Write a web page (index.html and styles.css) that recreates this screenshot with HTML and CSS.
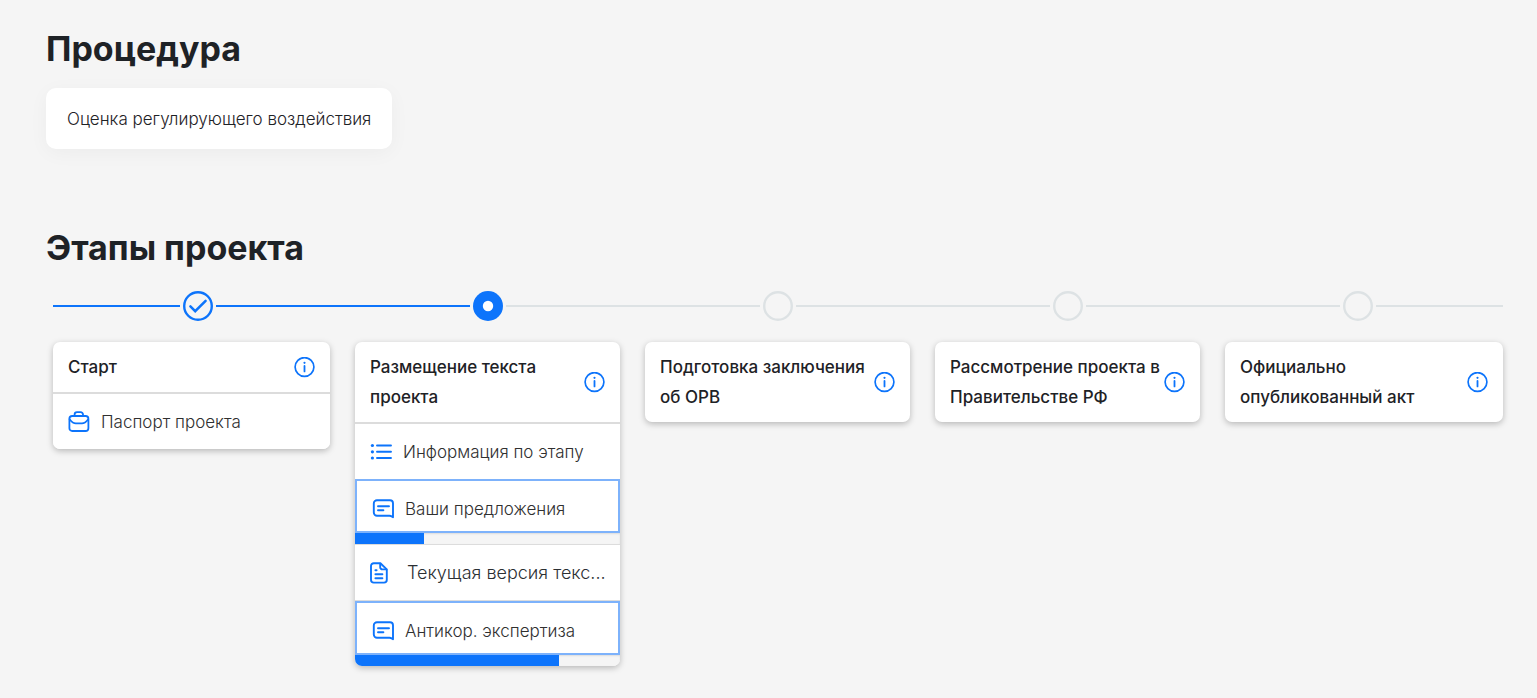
FILE: index.html
```html
<!DOCTYPE html>
<html lang="ru">
<head>
<meta charset="utf-8">
<meta name="viewport" content="width=device-width, initial-scale=1">
<title>Этапы проекта</title>
<link rel="stylesheet" href="styles.css">
</head>
<body>
<svg class="sprite" aria-hidden="true">
  <symbol id="info" viewBox="0 0 21 21">
    <circle cx="10.5" cy="10" r="9.4" fill="none" stroke="currentColor" stroke-width="1.7"/>
    <path d="M10.5 9v5.4" fill="none" stroke="currentColor" stroke-width="1.8" stroke-linecap="round"/>
    <circle cx="10.5" cy="5.8" r="1.1" fill="currentColor"/>
  </symbol>
  <symbol id="case" viewBox="0 0 22 22">
    <g fill="none" stroke="currentColor" stroke-width="1.8" stroke-linecap="round" stroke-linejoin="round">
      <rect x="1.4" y="5" width="19" height="15" rx="2.8"/>
      <path d="M6.6 4.8V3.6a2.4 2.4 0 0 1 2.4-2.4h3.6A2.4 2.4 0 0 1 15 3.6v1.2M1.6 8.2c2 2.6 3.8 4.2 6.2 4.2h6.2c2.4 0 4.2-1.6 6.2-4.2"/>
    </g>
  </symbol>
  <symbol id="list" viewBox="0 0 22 22">
    <path d="M7 4.5H21M7 10.8H21M7 17H21" fill="none" stroke="currentColor" stroke-width="1.9" stroke-linecap="round"/>
    <g fill="currentColor"><circle cx="2.4" cy="4.5" r="1.6"/><circle cx="2.4" cy="10.8" r="1.6"/><circle cx="2.4" cy="17" r="1.6"/></g>
  </symbol>
  <symbol id="chat" viewBox="0 0 22 22">
    <g fill="none" stroke="currentColor" stroke-width="1.9" stroke-linecap="round" stroke-linejoin="round">
      <path d="M5 2.2h13A3 3 0 0 1 21 5.2v14c-1.2-.7-2.2-1.4-3.6-1.4H5A3.2 3.2 0 0 1 1.8 14.6V5.4A3.2 3.2 0 0 1 5 2.2z"/>
      <path d="M6 8.2h11M6 12.2h5.4"/>
    </g>
  </symbol>
  <symbol id="doc" viewBox="0 0 22 22">
    <g fill="none" stroke="currentColor" stroke-width="1.9" stroke-linecap="round" stroke-linejoin="round">
      <path d="M3.8 1.2h6.6l6.4 6.2v10.4a2.8 2.8 0 0 1-2.8 2.8H3.8A2.8 2.8 0 0 1 1 17.8V4a2.8 2.8 0 0 1 2.8-2.8z"/>
      <path d="M10.2 1.6v3.6a2.2 2.2 0 0 0 2.2 2.2h4M5.4 8.2h1.2M5.4 12.2h7M5.4 16.2h7"/>
    </g>
  </symbol>
</svg>

<main class="page">
  <section class="procedure">
    <h1 class="title">Процедура</h1>
    <div class="procedure-card">Оценка регулирующего воздействия</div>
  </section>

  <section class="stages">
    <h2 class="title">Этапы проекта</h2>
    <ol class="stage-list">
      <li class="stage">
        <div class="track">
          <span class="line line-done"></span>
          <svg class="dot dot-active" viewBox="0 0 30 30" role="img" aria-label="Завершён"><circle cx="15" cy="15" r="13.8" fill="none" stroke="currentColor" stroke-width="2.4"/><path d="M7.4 15.4l4.8 4.8L22.6 9.8" fill="none" stroke="currentColor" stroke-width="2.5" stroke-linecap="round"/></svg>
          <span class="line line-done"></span>
        </div>
        <article class="card">
          <header class="card-head"><h3 class="card-title">Старт</h3><button class="info" type="button" aria-label="Информация"><svg class="icon-info"><use href="#info"/></svg></button></header>
          <a class="row row-first" href="#passport"><svg class="icon"><use href="#case"/></svg><span class="label">Паспорт проекта</span></a>
        </article>
      </li>
      <li class="stage">
        <div class="track">
          <span class="line line-done"></span>
          <svg class="dot dot-active" viewBox="0 0 30 30" role="img" aria-label="Текущий"><circle cx="15" cy="15" r="15" fill="currentColor"/><circle cx="15" cy="15" r="5.2" fill="#fff"/></svg>
          <span class="line"></span>
        </div>
        <article class="card">
          <header class="card-head"><h3 class="card-title">Размещение текста проекта</h3><button class="info" type="button" aria-label="Информация"><svg class="icon-info"><use href="#info"/></svg></button></header>
          <a class="row row-first" href="#info-stage"><svg class="icon"><use href="#list"/></svg><span class="label">Информация по этапу</span></a>
          <button class="row row-outlined" type="button"><svg class="icon"><use href="#chat"/></svg><span class="label">Ваши предложения</span></button>
          <div class="progress"><div class="bar" style="width:26%"></div></div>
          <a class="row row-file" href="#text"><svg class="icon"><use href="#doc"/></svg><span class="label">Текущая версия текс...</span></a>
          <button class="row row-outlined" type="button"><svg class="icon"><use href="#chat"/></svg><span class="label">Антикор. экспертиза</span></button>
          <div class="progress"><div class="bar" style="width:77%"></div></div>
        </article>
      </li>
      <li class="stage">
        <div class="track">
          <span class="line"></span>
          <svg class="dot" viewBox="0 0 30 30" aria-hidden="true"><circle cx="15" cy="15" r="13.8" fill="none" stroke="currentColor" stroke-width="2.4"/></svg>
          <span class="line"></span>
        </div>
        <article class="card">
          <header class="card-head"><h3 class="card-title">Подготовка заключения об ОРВ</h3><button class="info" type="button" aria-label="Информация"><svg class="icon-info"><use href="#info"/></svg></button></header>
        </article>
      </li>
      <li class="stage">
        <div class="track">
          <span class="line"></span>
          <svg class="dot" viewBox="0 0 30 30" aria-hidden="true"><circle cx="15" cy="15" r="13.8" fill="none" stroke="currentColor" stroke-width="2.4"/></svg>
          <span class="line"></span>
        </div>
        <article class="card">
          <header class="card-head"><h3 class="card-title">Рассмотрение проекта в Правительстве РФ</h3><button class="info" type="button" aria-label="Информация"><svg class="icon-info"><use href="#info"/></svg></button></header>
        </article>
      </li>
      <li class="stage">
        <div class="track">
          <span class="line"></span>
          <svg class="dot" viewBox="0 0 30 30" aria-hidden="true"><circle cx="15" cy="15" r="13.8" fill="none" stroke="currentColor" stroke-width="2.4"/></svg>
          <span class="line"></span>
        </div>
        <article class="card">
          <header class="card-head"><h3 class="card-title">Официально опубликованный акт</h3><button class="info" type="button" aria-label="Информация"><svg class="icon-info"><use href="#info"/></svg></button></header>
        </article>
      </li>
    </ol>
  </section>
</main>
</body>
</html>
```
FILE: styles.css
```css
* {
  box-sizing: border-box;
}

body {
  margin: 0;
  background: #f5f5f5;
  color: #1e2226;
  font-family: Inter, "Liberation Sans", sans-serif;
  font-size: 17px;
  font-weight: 300;
}

.sprite {
  position: absolute;
  width: 0;
  height: 0;
}

.page {
  padding: 27px 34px 32px 46px;
}

.title {
  margin: 0;
  font-size: 34px;
  font-weight: 700;
  line-height: 44px;
}

.procedure-card {
  width: fit-content;
  margin-top: 17px;
  padding: 16px 21px 15px;
  border-radius: 10px;
  background: #fff;
  box-shadow: 0 4px 20px rgba(0, 0, 0, 0.04);
  line-height: 30px;
}

.stages {
  margin-top: 77px;
}

.stage-list {
  display: grid;
  grid-template-columns: repeat(5, minmax(0, 1fr));
  align-items: start;
  margin: 21px 0 0;
  padding: 0 0 0 7px;
  list-style: none;
}

.track {
  display: flex;
  align-items: center;
  gap: 3px;
  margin-bottom: 21px;
}

.line {
  flex: 1;
  height: 2px;
  background: #dde2e4;
}

.line-done {
  background: #0d74fb;
}

.dot {
  width: 30px;
  height: 30px;
  color: #dde2e4;
}

.dot-active {
  color: #0d74fb;
}

.card {
  margin: 0 13px 0 12px;
  overflow: hidden;
  border-radius: 7px;
  background: #fff;
  box-shadow: 0 2px 6px rgba(0, 0, 0, 0.25);
}

.stage:first-child .card {
  margin-left: 0;
}

.stage:last-child .card {
  margin-right: 0;
}

.card-head {
  display: flex;
  align-items: center;
  justify-content: space-between;
  padding: 10px 15px;
}

.card-title {
  margin: 0;
  font-size: 17px;
  font-weight: 500;
  line-height: 30px;
}

.info {
  flex: none;
  display: flex;
  padding: 0;
  border: 0;
  background: none;
  color: #0d74fb;
  cursor: pointer;
}

.icon-info {
  width: 21px;
  height: 21px;
}

.row {
  display: flex;
  align-items: center;
  gap: 11px;
  width: 100%;
  height: 55px;
  padding: 0 15px;
  border: 0;
  background: #fff;
  color: #303030;
  font: inherit;
  text-align: left;
  text-decoration: none;
}

.row-first {
  height: 57px;
  border-top: 2px solid #dcdcdc;
}

.row-file {
  gap: 15px;
  height: 57px;
  padding-right: 8px;
  border-top: 1px solid #dcdcdc;
  border-bottom: 1px solid #dcdcdc;
  color: #2b2f33;
  font-size: 18px;
}

.row-outlined {
  height: 54px;
  padding-top: 5px;
  border: 2px solid #7db2fb;
  cursor: pointer;
}

.icon {
  flex: none;
  width: 22px;
  height: 22px;
  color: #0d74fb;
}

.label {
  min-width: 0;
  overflow: hidden;
  line-height: 30px;
  text-overflow: ellipsis;
  white-space: nowrap;
}

.progress {
  height: 11px;
  background: #f5f5f5;
  box-shadow: inset 0 1px 2px rgba(0, 0, 0, 0.1);
}

.bar {
  height: 100%;
  background: #0d74fb;
}
```
